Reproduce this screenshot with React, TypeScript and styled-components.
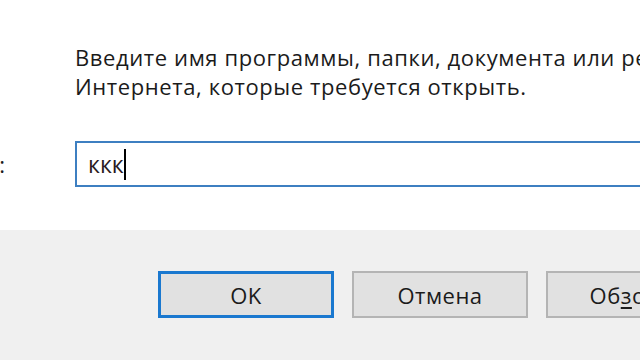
import * as React from "react";
import styled, { createGlobalStyle } from "styled-components";

const GlobalStyle = createGlobalStyle`
  html, body {
    margin: 0;
    padding: 0;
    width: 640px;
    height: 360px;
    overflow: hidden;
    background: #ffffff;
  }
`;

const FONT = `"Open Sans", "Noto Sans", "Liberation Sans", sans-serif`;

const Dialog = styled.div`
  width: 1000px;
  margin-left: -160px;
  font-family: ${FONT};
  color: #1b1b1b;
`;

const Body = styled.div`
  height: 230px;
  box-sizing: border-box;
  padding-top: 43px;
  background: #ffffff;
  display: grid;
  grid-template-columns: 165px 1fr;
  column-gap: 70px;
  align-content: start;
`;

const Message = styled.p`
  grid-column: 2;
  margin: 0;
  font-size: 22px;
  line-height: 29px;
  letter-spacing: 0.6px;
  white-space: nowrap;
`;

const Label = styled.label`
  grid-column: 1;
  align-self: center;
  text-align: right;
  font-size: 22px;
  line-height: 29px;
  margin-top: 40px;
`;

const Field = styled.div`
  grid-column: 2;
  margin-top: 40px;
  width: 800px;
  height: 46px;
  box-sizing: border-box;
  border: 2px solid #3d7fc1;
  background: #ffffff;
  display: flex;
  align-items: center;
  padding-left: 11px;
  font-size: 23px;
  color: #2a1a1e;
`;

const Caret = styled.span`
  display: inline-block;
  width: 2px;
  height: 31px;
  background: #000000;
`;

const Footer = styled.div`
  height: 130px;
  box-sizing: border-box;
  background: #f0f0f0;
  padding: 41px 0 0 318px;
  display: flex;
  gap: 18px;
`;

const Button = styled.button<{ $default?: boolean }>`
  width: 176px;
  height: 47px;
  box-sizing: border-box;
  border: 2px solid ${(p) => (p.$default ? "#1a78cf" : "#b4b4b4")};
  ${(p) => (p.$default ? "box-shadow: inset 0 0 0 1px #1a78cf;" : "")}
  background: #e1e1e1;
  font-family: ${FONT};
  font-size: 22px;
  letter-spacing: 0.5px;
  color: #1b1b1b;
  padding: 0;
  white-space: nowrap;
  flex-shrink: 0;
`;

const Accel = styled.span`
  text-decoration: underline;
  text-underline-offset: 3px;
`;

const App = () => (
  <>
    <GlobalStyle />
    <Dialog>
      <Body>
        <Message>
          Введите имя программы, папки, документа или ресурса
          <br />
          Интернета, которые требуется открыть.
        </Message>
        <Label>Открыть:</Label>
        <Field>
          ккк
          <Caret />
        </Field>
      </Body>
      <Footer>
        <Button $default>OK</Button>
        <Button>Отмена</Button>
        <Button>
          Об<Accel>з</Accel>ор...
        </Button>
      </Footer>
    </Dialog>
  </>
);

export default App;
